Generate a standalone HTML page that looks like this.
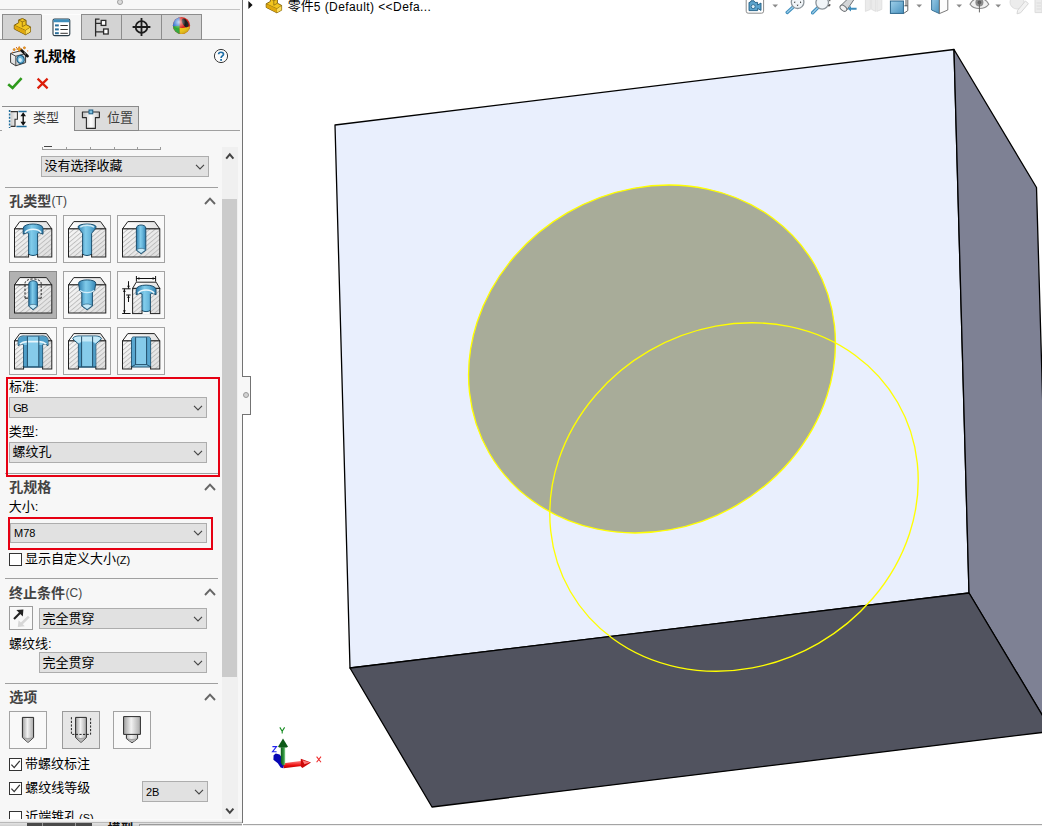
<!DOCTYPE html>
<html lang="zh-CN">
<head>
<meta charset="utf-8">
<title>孔规格 - SOLIDWORKS</title>
<style>
html,body{margin:0;padding:0}
body{width:1042px;height:826px;overflow:hidden;position:relative;background:#fff;font-family:"Liberation Sans",sans-serif;font-size:11px;color:#000}
.b{position:absolute;box-sizing:border-box;display:block}
.tx{position:absolute;display:block;white-space:nowrap;font-family:"Liberation Sans","Noto Sans CJK SC",sans-serif;font-size:13px;line-height:14px;color:#000}
.tx.h{font-size:14px;line-height:15px;font-weight:bold;color:#434343}
.lt{position:absolute;white-space:nowrap;font-family:"Liberation Sans",sans-serif;line-height:1}
.dd{position:absolute;box-sizing:border-box;background:#e1e1e1;border:1px solid #adadad}
.hb{position:absolute;box-sizing:border-box;background:#f9f9f9;border:1px solid #a3a3a3}
.hb.sel{background:#b2b2b2;border-color:#8c8c8c}
.sep{position:absolute;height:1px;background:#a0a0a0;left:5px;width:213px}
.cb{position:absolute;box-sizing:border-box;width:13px;height:13px;background:#fff;border:1px solid #333}
</style>
</head>
<body>
<svg class="b" style="left:0;top:0" width="1042" height="826" viewBox="0 0 1042 826">
<g stroke="#000" stroke-width="1.3" stroke-linejoin="round">
<polygon points="335,125 954,49.5 969,593 350,668" fill="#e9effd"/>
<polygon points="954,49.5 1036.5,187.5 1043.5,430 1050,728 969,593" fill="#7e8194"/>
<polygon points="350,668 969,593 1050,728 1050,731.5 432,807" fill="#51535f"/>
</g>
<g transform="rotate(-30 652 359)"><ellipse cx="652" cy="359" rx="188" ry="169" fill="#a8ac99" stroke="#ffff00" stroke-width="1.35"/></g>
<g transform="rotate(-30 734 497)"><ellipse cx="734" cy="497" rx="189" ry="169" fill="none" stroke="#ffff00" stroke-width="1.35"/></g>

</svg>
<div class="b" style="left:0px;top:0px;width:242px;height:826px;background:#f7f7f7"></div>
<div class="b" style="left:242px;top:0px;width:1px;height:377px;background:#737373"></div>
<div class="b" style="left:242px;top:414px;width:1px;height:409px;background:#737373"></div>
<div class="b" style="left:242px;top:376px;width:9px;height:39px;background:#f7f7f7;border:1px solid #737373;border-left:none"></div>
<div class="b" style="left:243px;top:392px;width:6px;height:6px;background:#d2d2d2;border:1px solid #989898;border-radius:50%"></div>
<div class="b" style="left:0px;top:9px;width:240px;height:1px;background:#c3c3c3"></div>
<div class="b" style="left:117px;top:-1px;width:6px;height:6px;background:#dcdcdc;border:1px solid #a0a0a0;border-radius:50%"></div>
<div class="b" style="left:0px;top:39px;width:42px;height:1px;background:#a0a0a0"></div>
<div class="b" style="left:81px;top:39px;width:159px;height:1px;background:#a0a0a0"></div>
<div class="b" style="left:2px;top:14px;width:40px;height:26px;background:#d3d3d3;border:1px solid #8c8c8c"></div>
<div class="b" style="left:41px;top:14px;width:41px;height:26px;background:#f7f7f7;border-left:1px solid #8c8c8c;border-right:1px solid #8c8c8c;border-top:1px solid #fdfdfd"></div>
<div class="b" style="left:81px;top:14px;width:41px;height:26px;background:#d3d3d3;border:1px solid #8c8c8c"></div>
<div class="b" style="left:121px;top:14px;width:41px;height:26px;background:#d3d3d3;border:1px solid #8c8c8c"></div>
<div class="b" style="left:161px;top:14px;width:41px;height:26px;background:#d3d3d3;border:1px solid #8c8c8c"></div>
<span class="tx h" style="left:33.9px;top:48.60px;color:#000">孔规格</span>
<svg class="b" style="left:213px;top:48px" width="16" height="16" viewBox="0 0 16 16" ><circle cx="8" cy="8" r="6.6" fill="#fbfbfb" stroke="#3a3a3a" stroke-width="1"/><path d="M5.6 6.3 C5.6 3.6 10.5 3.6 10.5 6.2 C10.5 7.9 8.1 8 8.1 9.9" fill="none" stroke="#1f6ea6" stroke-width="1.7"/><rect x="7.2" y="11" width="1.8" height="1.8" fill="#1f6ea6"/></svg>
<svg class="b" style="left:6px;top:76px" width="18" height="14" viewBox="0 0 18 14" ><path d="M2.2 8.2 L6.6 12 L15.6 2.2" fill="none" stroke="#2e9a1c" stroke-width="2.6" stroke-linejoin="miter"/></svg>
<svg class="b" style="left:36px;top:77px" width="14" height="13" viewBox="0 0 14 13" ><path d="M1.6 1.6 L11.6 11.4 M11.6 1.6 L1.6 11.4" fill="none" stroke="#dc1e0a" stroke-width="2.2"/></svg>
<div class="b" style="left:0px;top:130px;width:240px;height:1px;background:#a0a0a0"></div>
<div class="b" style="left:2px;top:106px;width:73px;height:26px;background:#f7f7f7;border-top:1px solid #8e8e8e"></div>
<div class="b" style="left:74px;top:106px;width:65.4px;height:25px;background:#dcdcdc;border:1px solid #8a8a8a"></div>
<span class="tx" style="left:33.1px;top:111.00px;color:#3c3c3c">类型</span>
<span class="tx" style="left:107.1px;top:111.00px;color:#3c3c3c">位置</span>
<div class="b" style="left:42px;top:146.5px;width:119.4px;height:3px;border:1px solid #9a9a9a;border-top:none;background:transparent"></div>
<div class="b" style="left:66px;top:146.5px;width:1px;height:2.5px;background:#9a9a9a"></div>
<div class="b" style="left:90px;top:146.5px;width:1px;height:2.5px;background:#9a9a9a"></div>
<div class="b" style="left:113.5px;top:146.5px;width:1px;height:2.5px;background:#9a9a9a"></div>
<div class="b" style="left:137px;top:146.5px;width:1px;height:2.5px;background:#9a9a9a"></div>
<div class="b" style="left:44px;top:146.3px;width:8px;height:1.2px;background:#444"></div>
<div class="dd" style="left:41px;top:156px;width:168px;height:21px"></div><svg class="b" style="left:194.2px;top:161.9px" width="12" height="10" viewBox="0 0 12 10" ><path d="M2 2.800 L6 7 L10 2.800" fill="none" stroke="#444" stroke-width="1.1"/></svg>
<span class="tx" style="left:44.4px;top:159.00px">没有选择收藏</span>
<div class="b" style="left:222px;top:146.5px;width:16px;height:672.5px;background:#f0f0f0"></div>
<div class="b" style="left:222px;top:199px;width:15px;height:478px;background:#cbcbcb"></div>
<svg class="b" style="left:222px;top:150px" width="16" height="12" viewBox="0 0 16 12" ><path d="M4.2 8.600 L7.800 4.400 L11.400 8.600" fill="none" stroke="#444" stroke-width="2"/></svg>
<svg class="b" style="left:222px;top:805px" width="16" height="12" viewBox="0 0 16 12" ><path d="M4.2 3.6 L7.8 7.8 L11.4 3.6" fill="none" stroke="#444" stroke-width="2"/></svg>
<div class="sep" style="top:187px"></div>
<span class="tx h" style="left:9.3px;top:194.20px">孔类型</span>
<span class="tx" style="left:51.6px;top:195.20px;font-size:12px;line-height:13px;color:#434343">(T)</span>
<svg class="b" style="left:203.3px;top:196.2px" width="14" height="10" viewBox="0 0 14 10" ><path d="M2 8 L7 2.6 L12 8" fill="none" stroke="#666" stroke-width="1.9"/></svg>
<span class="tx" style="left:9.1px;top:380.20px">标准:</span>
<div class="dd" style="left:9px;top:397px;width:198px;height:21px"></div><svg class="b" style="left:192.2px;top:402.9px" width="12" height="10" viewBox="0 0 12 10" ><path d="M2 2.800 L6 7 L10 2.800" fill="none" stroke="#444" stroke-width="1.1"/></svg>
<span class="lt" style="left:13.2px;top:403.3px;font-size:11px;color:#000;font-weight:normal;letter-spacing:-0.7px">GB</span>
<span class="tx" style="left:8.8px;top:425.20px">类型:</span>
<div class="dd" style="left:9px;top:442px;width:198px;height:21px"></div><svg class="b" style="left:192.2px;top:447.9px" width="12" height="10" viewBox="0 0 12 10" ><path d="M2 2.800 L6 7 L10 2.800" fill="none" stroke="#444" stroke-width="1.1"/></svg>
<span class="tx" style="left:12.6px;top:445.20px">螺纹孔</span>
<div class="sep" style="top:473px"></div>
<div class="b" style="left:6px;top:377px;width:214px;height:100px;border:2px solid #e60013"></div>
<span class="tx h" style="left:9.3px;top:480.40px">孔规格</span>
<svg class="b" style="left:203.1px;top:482px" width="14" height="10" viewBox="0 0 14 10" ><path d="M2 8 L7 2.6 L12 8" fill="none" stroke="#666" stroke-width="1.9"/></svg>
<span class="tx" style="left:8.8px;top:500.00px">大小:</span>
<div class="dd" style="left:10px;top:523px;width:197px;height:20px"></div><svg class="b" style="left:192.2px;top:528.4px" width="12" height="10" viewBox="0 0 12 10" ><path d="M2 2.800 L6 7 L10 2.800" fill="none" stroke="#444" stroke-width="1.1"/></svg>
<span class="lt" style="left:14px;top:528.2px;font-size:11px;color:#000;font-weight:normal;">M78</span>
<div class="b" style="left:8px;top:517px;width:205px;height:33px;border:2px solid #e60013"></div>
<div class="cb" style="left:9px;top:553px"></div>
<span class="tx" style="left:25.1px;top:552.20px">显示自定义大小</span>
<span class="tx" style="left:116.2px;top:554.00px;font-size:11px;line-height:12px">(Z)</span>
<div class="sep" style="top:578px"></div>
<span class="tx h" style="left:8.9px;top:585.60px">终止条件</span>
<span class="tx" style="left:65.6px;top:586.60px;font-size:12px;line-height:13px;color:#434343">(C)</span>
<svg class="b" style="left:203.1px;top:587.4px" width="14" height="10" viewBox="0 0 14 10" ><path d="M2 8 L7 2.6 L12 8" fill="none" stroke="#666" stroke-width="1.9"/></svg>
<div class="b" style="left:9px;top:606px;width:24px;height:24px;background:#f9f9f9;border:1px solid #9c9c9c"></div>
<svg class="b" style="left:9px;top:606px" width="24" height="24" viewBox="0 0 24 24" ><path d="M19.8 10.6 L12.2 18" stroke="#d7d7d7" stroke-width="2.5" fill="none"/><path d="M8.8 21 L9.600 14.2 L15.8 20.2 Z" fill="#d7d7d7"/><path d="M5 13 L12.2 5.8" stroke="#222" stroke-width="2.1" fill="none"/><path d="M7.4 4 L14.4 3.4 L13.8 10.4 Z" fill="#222"/></svg>
<div class="dd" style="left:39px;top:608px;width:168px;height:21px"></div><svg class="b" style="left:192.2px;top:613.9px" width="12" height="10" viewBox="0 0 12 10" ><path d="M2 2.800 L6 7 L10 2.800" fill="none" stroke="#444" stroke-width="1.1"/></svg>
<span class="tx" style="left:42.6px;top:611.50px">完全贯穿</span>
<span class="tx" style="left:8.9px;top:637.10px">螺纹线:</span>
<div class="dd" style="left:39px;top:652px;width:168px;height:21px"></div><svg class="b" style="left:192.2px;top:657.9px" width="12" height="10" viewBox="0 0 12 10" ><path d="M2 2.800 L6 7 L10 2.800" fill="none" stroke="#444" stroke-width="1.1"/></svg>
<span class="tx" style="left:42.6px;top:655.50px">完全贯穿</span>
<div class="sep" style="top:683px"></div>
<span class="tx h" style="left:9.2px;top:690.20px">选项</span>
<svg class="b" style="left:203.1px;top:692.2px" width="14" height="10" viewBox="0 0 14 10" ><path d="M2 8 L7 2.6 L12 8" fill="none" stroke="#666" stroke-width="1.9"/></svg>
<div class="hb" style="left:9px;top:711px;width:38px;height:38px;"></div>
<div class="hb" style="left:62px;top:711px;width:38px;height:38px;background:#e6e6e6;border-color:#9a9a9a"></div>
<div class="hb" style="left:113px;top:711px;width:38px;height:38px;"></div>
<div class="cb" style="left:9px;top:758px"></div><svg class="b" style="left:9px;top:758px" width="13" height="13" viewBox="0 0 13 13" ><path d="M2.4 6.6 L5.2 9.6 L10.8 2.8" fill="none" stroke="#333" stroke-width="1.25"/></svg>
<span class="tx" style="left:25.1px;top:757.20px">带螺纹标注</span>
<div class="cb" style="left:9px;top:782px"></div><svg class="b" style="left:9px;top:782px" width="13" height="13" viewBox="0 0 13 13" ><path d="M2.4 6.6 L5.2 9.6 L10.8 2.8" fill="none" stroke="#333" stroke-width="1.25"/></svg>
<span class="tx" style="left:25.3px;top:781.30px">螺纹线等级</span>
<div class="dd" style="left:142px;top:781px;width:66px;height:21px"></div><svg class="b" style="left:193.2px;top:786.9px" width="12" height="10" viewBox="0 0 12 10" ><path d="M2 2.800 L6 7 L10 2.800" fill="none" stroke="#444" stroke-width="1.1"/></svg>
<span class="lt" style="left:146px;top:787px;font-size:11px;color:#000;font-weight:normal;">2B</span>
<div class="cb" style="left:9px;top:811px;height:9px;border-bottom:none"></div>
<span class="tx" style="left:25.3px;top:810.20px;width:54.70px;height:8.60px;overflow:hidden">近端锥孔</span>
<span class="tx" style="left:79.1px;top:812.20px;width:14.53px;height:6.60px;overflow:hidden;font-size:11px;line-height:12px">(S)</span>
<div class="b" style="left:0px;top:819px;width:242px;height:7px;background:linear-gradient(#fdfdfd,#e4e4e4 55%,#cfcfcf)"></div>
<div class="b" style="left:0px;top:822px;width:242px;height:1px;background:#b9b9b9"></div>
<div class="b" style="left:243px;top:824px;width:799px;height:1px;background:#a4a4a4"></div>
<div class="b" style="left:243px;top:825px;width:799px;height:1px;background:#f0f0f0"></div>
<div class="b" style="left:27px;top:823.4px;width:65px;height:3px;background:#4a4a4a"></div>
<div class="b" style="left:42px;top:823.4px;width:1px;height:3px;background:#9a9a9a"></div>
<div class="b" style="left:74.5px;top:823.4px;width:1px;height:3px;background:#9a9a9a"></div>
<span class="tx" style="left:107.4px;top:821.60px;width:27.70px;height:4.60px;overflow:hidden;color:#111;font-weight:bold">模型</span>
<div class="b" style="left:139px;top:823.6px;width:103px;height:3px;background:#d8d8d8;border-top:1px solid #9a9a9a;border-left:1px solid #9a9a9a"></div>
<div class="hb" style="left:9px;top:215px;width:48px;height:48px"></div>
<svg class="b" style="left:9px;top:215px" width="48" height="48" viewBox="0 0 48 48" ><defs><linearGradient id="bl0" x1="0" x2="1" y1="0" y2="0"><stop offset="0" stop-color="#2f7eae"/><stop offset=".42" stop-color="#80cbea"/><stop offset=".62" stop-color="#6cbade"/><stop offset="1" stop-color="#3283b3"/></linearGradient><linearGradient id="tf0" x1="0" x2="1" y1="0" y2="0"><stop offset="0" stop-color="#ffffff"/><stop offset="1" stop-color="#e2e2e2"/></linearGradient><linearGradient id="ff0" x1="0" x2="1" y1="0" y2="1"><stop offset="0" stop-color="#f7f7f7"/><stop offset="1" stop-color="#dedede"/></linearGradient><pattern id="ht0" width="4" height="3.5" patternUnits="userSpaceOnUse" patternTransform="rotate(-40)"><rect width="4" height="0.95" fill="#bdbdbd"/></pattern></defs><path d="M5.5 13.9 L10.8 6.6 L37.5 6.6 L42.8 13.9 Z" fill="url(#tf0)" stroke="#222" stroke-width="1" stroke-linejoin="round"/><rect x="5.5" y="13.9" width="37.3" height="28.1" fill="url(#ff0)"/><rect x="5.5" y="13.9" width="37.3" height="28.1" fill="url(#ht0)" stroke="#222" stroke-width="1"/><rect x="19.6" y="38" width="9" height="5" fill="#f9f9f9"/><path d="M14.2 13.2 C14.2 7.6 34 7.6 34 13.2 L34 19.2 C31.5 17.8 29.6 17.6 28.6 18.4 L28.6 39 C26 41 22 41 19.6 39 L19.6 18.4 C18.6 17.6 16.7 17.8 14.2 19.2 Z" fill="url(#bl0)" stroke="#1c4f6e" stroke-width="1" stroke-linejoin="round" /><path d="M16 17.6 C19 13.2 29.2 13.2 32.2 17.6" fill="none" stroke="#e8f6fc" stroke-width="1.5"/><path d="M19.6 39 L19.6 42.4 M28.6 39 L28.6 42.4" stroke="#222" stroke-width="1"/></svg>
<div class="hb" style="left:63px;top:215px;width:48px;height:48px"></div>
<svg class="b" style="left:63px;top:215px" width="48" height="48" viewBox="0 0 48 48" ><defs><linearGradient id="bl1" x1="0" x2="1" y1="0" y2="0"><stop offset="0" stop-color="#2f7eae"/><stop offset=".42" stop-color="#80cbea"/><stop offset=".62" stop-color="#6cbade"/><stop offset="1" stop-color="#3283b3"/></linearGradient><linearGradient id="tf1" x1="0" x2="1" y1="0" y2="0"><stop offset="0" stop-color="#ffffff"/><stop offset="1" stop-color="#e2e2e2"/></linearGradient><linearGradient id="ff1" x1="0" x2="1" y1="0" y2="1"><stop offset="0" stop-color="#f7f7f7"/><stop offset="1" stop-color="#dedede"/></linearGradient><pattern id="ht1" width="4" height="3.5" patternUnits="userSpaceOnUse" patternTransform="rotate(-40)"><rect width="4" height="0.95" fill="#bdbdbd"/></pattern></defs><path d="M5.5 13.9 L10.8 6.6 L37.5 6.6 L42.8 13.9 Z" fill="url(#tf1)" stroke="#222" stroke-width="1" stroke-linejoin="round"/><rect x="5.5" y="13.9" width="37.3" height="28.1" fill="url(#ff1)"/><rect x="5.5" y="13.9" width="37.3" height="28.1" fill="url(#ht1)" stroke="#222" stroke-width="1"/><rect x="19.6" y="38" width="9" height="5" fill="#f9f9f9"/><path d="M15 12 C15 8 33.2 8 33.2 12 C31.5 15.5 29.4 17 28.6 18.6 L28.6 39 C26 41 22 41 19.6 39 L19.6 18.6 C18.8 17 16.7 15.5 15 12 Z" fill="url(#bl1)" stroke="#1c4f6e" stroke-width="1" stroke-linejoin="round" /><path d="M17.2 12.2 C20 9.6 28.2 9.6 31 12.2" fill="none" stroke="#cdeaf6" stroke-width="1.3"/><path d="M19.6 39 L19.6 42.4 M28.6 39 L28.6 42.4" stroke="#222" stroke-width="1"/></svg>
<div class="hb" style="left:117px;top:215px;width:48px;height:48px"></div>
<svg class="b" style="left:117px;top:215px" width="48" height="48" viewBox="0 0 48 48" ><defs><linearGradient id="bl2" x1="0" x2="1" y1="0" y2="0"><stop offset="0" stop-color="#2f7eae"/><stop offset=".42" stop-color="#80cbea"/><stop offset=".62" stop-color="#6cbade"/><stop offset="1" stop-color="#3283b3"/></linearGradient><linearGradient id="tf2" x1="0" x2="1" y1="0" y2="0"><stop offset="0" stop-color="#ffffff"/><stop offset="1" stop-color="#e2e2e2"/></linearGradient><linearGradient id="ff2" x1="0" x2="1" y1="0" y2="1"><stop offset="0" stop-color="#f7f7f7"/><stop offset="1" stop-color="#dedede"/></linearGradient><pattern id="ht2" width="4" height="3.5" patternUnits="userSpaceOnUse" patternTransform="rotate(-40)"><rect width="4" height="0.95" fill="#bdbdbd"/></pattern></defs><path d="M5.5 13.9 L10.8 6.6 L37.5 6.6 L42.8 13.9 Z" fill="url(#tf2)" stroke="#222" stroke-width="1" stroke-linejoin="round"/><rect x="5.5" y="13.9" width="37.3" height="28.1" fill="url(#ff2)"/><rect x="5.5" y="13.9" width="37.3" height="28.1" fill="url(#ht2)" stroke="#222" stroke-width="1"/><path d="M19.4 13 C19.4 9 28.8 9 28.8 13 L28.8 35.2 L24.1 38.8 L19.4 35.2 Z" fill="url(#bl2)" stroke="#1c4f6e" stroke-width="1" stroke-linejoin="round" /><path d="M19.6 35 C21.5 32.8 26.7 32.8 28.6 35 L24.1 38.4 Z" fill="#c6ebfa" stroke="#1c4f6e" stroke-width=".6"/></svg>
<div class="hb sel" style="left:9px;top:271px;width:48px;height:48px"></div>
<svg class="b" style="left:9px;top:271px" width="48" height="48" viewBox="0 0 48 48" ><defs><linearGradient id="bl3" x1="0" x2="1" y1="0" y2="0"><stop offset="0" stop-color="#2f7eae"/><stop offset=".42" stop-color="#80cbea"/><stop offset=".62" stop-color="#6cbade"/><stop offset="1" stop-color="#3283b3"/></linearGradient><linearGradient id="tf3" x1="0" x2="1" y1="0" y2="0"><stop offset="0" stop-color="#ffffff"/><stop offset="1" stop-color="#e2e2e2"/></linearGradient><linearGradient id="ff3" x1="0" x2="1" y1="0" y2="1"><stop offset="0" stop-color="#f7f7f7"/><stop offset="1" stop-color="#dedede"/></linearGradient><pattern id="ht3" width="4" height="3.5" patternUnits="userSpaceOnUse" patternTransform="rotate(-40)"><rect width="4" height="0.95" fill="#bdbdbd"/></pattern></defs><path d="M5.5 13.9 L10.8 6.6 L37.5 6.6 L42.8 13.9 Z" fill="url(#tf3)" stroke="#222" stroke-width="1" stroke-linejoin="round"/><rect x="5.5" y="13.9" width="37.3" height="28.1" fill="url(#ff3)"/><rect x="5.5" y="13.9" width="37.3" height="28.1" fill="url(#ht3)" stroke="#222" stroke-width="1"/><path d="M19.8 12.6 C19.8 8.8 28.4 8.8 28.4 12.6 L28.4 35.2 L24.1 38.8 L19.8 35.2 Z" fill="url(#bl3)" stroke="#1c4f6e" stroke-width="1" stroke-linejoin="round" /><path d="M19.9 35 C21.6 32.8 26.6 32.8 28.3 35 L24.1 38.4 Z" fill="#c6ebfa" stroke="#1c4f6e" stroke-width=".6"/><path d="M16 27.2 L16 12.5 C16 6.4 32.2 6.4 32.2 12.5 L32.2 27.2" fill="none" stroke="#222" stroke-width="1" stroke-dasharray="2.2 1.5"/><path d="M16 27.2 L19 27.2 M29.2 27.2 L32.2 27.2" stroke="#222" stroke-width="1"/></svg>
<div class="hb" style="left:63px;top:271px;width:48px;height:48px"></div>
<svg class="b" style="left:63px;top:271px" width="48" height="48" viewBox="0 0 48 48" ><defs><linearGradient id="bl4" x1="0" x2="1" y1="0" y2="0"><stop offset="0" stop-color="#2f7eae"/><stop offset=".42" stop-color="#80cbea"/><stop offset=".62" stop-color="#6cbade"/><stop offset="1" stop-color="#3283b3"/></linearGradient><linearGradient id="tf4" x1="0" x2="1" y1="0" y2="0"><stop offset="0" stop-color="#ffffff"/><stop offset="1" stop-color="#e2e2e2"/></linearGradient><linearGradient id="ff4" x1="0" x2="1" y1="0" y2="1"><stop offset="0" stop-color="#f7f7f7"/><stop offset="1" stop-color="#dedede"/></linearGradient><pattern id="ht4" width="4" height="3.5" patternUnits="userSpaceOnUse" patternTransform="rotate(-40)"><rect width="4" height="0.95" fill="#bdbdbd"/></pattern></defs><path d="M5.5 13.9 L10.8 6.6 L37.5 6.6 L42.8 13.9 Z" fill="url(#tf4)" stroke="#222" stroke-width="1" stroke-linejoin="round"/><rect x="5.5" y="13.9" width="37.3" height="28.1" fill="url(#ff4)"/><rect x="5.5" y="13.9" width="37.3" height="28.1" fill="url(#ht4)" stroke="#222" stroke-width="1"/><path d="M15.6 12.2 C15.6 7.8 32.8 7.8 32.8 12.2 L31.6 19.6 C30.8 20.6 30 20.8 29.4 21 L29.4 35 L24.1 38.8 L18.8 35 L18.8 21 C18.2 20.8 17.4 20.6 16.6 19.6 Z" fill="url(#bl4)" stroke="#1c4f6e" stroke-width="1" stroke-linejoin="round" /><path d="M17 19.4 C20 22.4 28.2 22.4 31.2 19.4" fill="none" stroke="#d4eefa" stroke-width="1.3"/><path d="M19 34.8 C21 32.4 27.2 32.4 29.2 34.8 L24.1 38.4 Z" fill="#c6ebfa" stroke="#1c4f6e" stroke-width=".6"/></svg>
<div class="hb" style="left:117px;top:271px;width:48px;height:48px"></div>
<svg class="b" style="left:117px;top:271px" width="48" height="48" viewBox="0 0 48 48" ><defs><linearGradient id="bl5" x1="0" x2="1" y1="0" y2="0"><stop offset="0" stop-color="#2f7eae"/><stop offset=".42" stop-color="#80cbea"/><stop offset=".62" stop-color="#6cbade"/><stop offset="1" stop-color="#3283b3"/></linearGradient><linearGradient id="tf5" x1="0" x2="1" y1="0" y2="0"><stop offset="0" stop-color="#ffffff"/><stop offset="1" stop-color="#e2e2e2"/></linearGradient><linearGradient id="ff5" x1="0" x2="1" y1="0" y2="1"><stop offset="0" stop-color="#f7f7f7"/><stop offset="1" stop-color="#dedede"/></linearGradient><pattern id="ht5" width="4" height="3.5" patternUnits="userSpaceOnUse" patternTransform="rotate(-40)"><rect width="4" height="0.95" fill="#bdbdbd"/></pattern></defs><path d="M15.6 17.4 L19.2 11.2 L39.2 11.2 L42.8 17.4 Z" fill="url(#tf5)" stroke="#222" stroke-width="1" stroke-linejoin="round"/><rect x="15.6" y="17.4" width="27.2" height="25.2" fill="url(#ff5)"/><rect x="15.6" y="17.4" width="27.2" height="25.2" fill="url(#ht5)" stroke="#222" stroke-width="1"/><rect x="25" y="38.5" width="8.4" height="5" fill="#f9f9f9"/><path d="M19.2 18.6 C19.2 12.6 39 12.6 39 18.6 L39 23.8 C36.5 22.4 34.4 22.2 33.4 23 L33.4 39.4 C31 41 27 41 25 39.4 L25 23 C24 22.2 21.7 22.4 19.2 23.8 Z" fill="url(#bl5)" stroke="#1c4f6e" stroke-width="1" stroke-linejoin="round" /><path d="M21 22.4 C24 18 34.2 18 37.2 22.4" fill="none" stroke="#e8f6fc" stroke-width="1.5"/><path d="M25 39.4 L25 43 M33.4 39.4 L33.4 43" stroke="#222" stroke-width="1"/><g stroke="#111" stroke-width="1" fill="none"><path d="M19.4 5 L19.4 10.600 M38.6 5 L38.6 10.600 M19.4 7.500 L38.6 7.500"/><path d="M5.200 17.800 L13.600 17.800 M5.200 42.500 L13.600 42.500 M7.400 17.800 L7.400 42.500 M9.200 24 L13.600 24 M11.500 10.200 L11.500 17.600 M11.500 24.200 L11.500 31"/></g><g fill="#111"><path d="M19.4 7.500 L22.400 6.200 L22.400 8.800 Z M38.6 7.500 L35.600 6.200 L35.600 8.800 Z M7.400 17.800 L6.100 21 L8.700 21 Z M7.400 42.500 L6.100 39.300 L8.700 39.300 Z M11.500 17.800 L10.200 14.800 L12.800 14.800 Z M11.500 24 L10.200 27 L12.800 27 Z"/></g></svg>
<div class="hb" style="left:9px;top:327px;width:48px;height:48px"></div>
<svg class="b" style="left:9px;top:327px" width="48" height="48" viewBox="0 0 48 48" ><defs><linearGradient id="bl6" x1="0" x2="1" y1="0" y2="0"><stop offset="0" stop-color="#2f7eae"/><stop offset=".42" stop-color="#80cbea"/><stop offset=".62" stop-color="#6cbade"/><stop offset="1" stop-color="#3283b3"/></linearGradient><linearGradient id="tf6" x1="0" x2="1" y1="0" y2="0"><stop offset="0" stop-color="#ffffff"/><stop offset="1" stop-color="#e2e2e2"/></linearGradient><linearGradient id="ff6" x1="0" x2="1" y1="0" y2="1"><stop offset="0" stop-color="#f7f7f7"/><stop offset="1" stop-color="#dedede"/></linearGradient><pattern id="ht6" width="4" height="3.5" patternUnits="userSpaceOnUse" patternTransform="rotate(-40)"><rect width="4" height="0.95" fill="#bdbdbd"/></pattern></defs><path d="M5.5 13.9 L10.8 6.6 L37.5 6.6 L42.8 13.9 Z" fill="url(#tf6)" stroke="#222" stroke-width="1" stroke-linejoin="round"/><rect x="5.5" y="13.9" width="37.3" height="28.1" fill="url(#ff6)"/><rect x="5.5" y="13.9" width="37.3" height="28.1" fill="url(#ht6)" stroke="#222" stroke-width="1"/><rect x="14.6" y="37" width="19" height="6" fill="#f9f9f9"/><path d="M9.2 13 C9.2 8 16 9 17 9 L31.2 9 C32.2 9 39 8 39 13 L39 18.6 C36 16.6 34.2 16.8 33.6 17.8 L33.6 40 L14.6 40 L14.6 17.8 C14 16.8 12.2 16.6 9.2 18.6 Z" fill="#86cbea" stroke="#1c4f6e" stroke-width="1" stroke-linejoin="round"/><path d="M9.6 12.4 C10 9.4 14 9.4 18.4 9.4 L18.4 14.4 C14 14.6 11.4 15.6 9.6 18 Z M38.6 12.4 C38.2 9.4 34.2 9.4 29.8 9.4 L29.8 14.4 C34.2 14.6 36.8 15.6 38.6 18 Z" fill="#4f9ec8"/><path d="M15 18 L18.4 18 L18.4 39.6 L15 39.6 Z M33.2 18 L29.8 18 L29.8 39.6 L33.2 39.6 Z" fill="#4f9ec8"/><path d="M11 17.2 C14 14.4 17 14.6 18.4 14.6 L29.8 14.6 C31.2 14.6 34.2 14.4 37.2 17.2" fill="none" stroke="#e8f6fc" stroke-width="1.6"/><path d="M18.4 9.4 L18.4 39.8 M29.8 9.4 L29.8 39.8" stroke="#17425c" stroke-width=".9"/><path d="M14.6 39.4 L14.6 42.4 M33.6 39.4 L33.6 42.4" stroke="#222" stroke-width="1"/><path d="M14.6 40 L33.6 40" stroke="#1c4f6e" stroke-width="1"/></svg>
<div class="hb" style="left:63px;top:327px;width:48px;height:48px"></div>
<svg class="b" style="left:63px;top:327px" width="48" height="48" viewBox="0 0 48 48" ><defs><linearGradient id="bl7" x1="0" x2="1" y1="0" y2="0"><stop offset="0" stop-color="#2f7eae"/><stop offset=".42" stop-color="#80cbea"/><stop offset=".62" stop-color="#6cbade"/><stop offset="1" stop-color="#3283b3"/></linearGradient><linearGradient id="tf7" x1="0" x2="1" y1="0" y2="0"><stop offset="0" stop-color="#ffffff"/><stop offset="1" stop-color="#e2e2e2"/></linearGradient><linearGradient id="ff7" x1="0" x2="1" y1="0" y2="1"><stop offset="0" stop-color="#f7f7f7"/><stop offset="1" stop-color="#dedede"/></linearGradient><pattern id="ht7" width="4" height="3.5" patternUnits="userSpaceOnUse" patternTransform="rotate(-40)"><rect width="4" height="0.95" fill="#bdbdbd"/></pattern></defs><path d="M5.5 13.9 L10.8 6.6 L37.5 6.6 L42.8 13.9 Z" fill="url(#tf7)" stroke="#222" stroke-width="1" stroke-linejoin="round"/><rect x="5.5" y="13.9" width="37.3" height="28.1" fill="url(#ff7)"/><rect x="5.5" y="13.9" width="37.3" height="28.1" fill="url(#ht7)" stroke="#222" stroke-width="1"/><rect x="15.4" y="37" width="17.4" height="6" fill="#f9f9f9"/><path d="M9.8 11.6 C11 8.6 16 9 18 9 L30.2 9 C32.2 9 37.2 8.600 38.4 11.6 C36.4 14.8 33.8 15.4 32.8 17 L32.8 40 L15.4 40 L15.4 17 C14.4 15.4 11.800 14.8 9.8 11.6 Z" fill="#86cbea" stroke="#1c4f6e" stroke-width="1" stroke-linejoin="round"/><path d="M10.4 11.6 C12 9.6 15 9.6 18.6 9.6 L29.6 9.6 C33.2 9.6 36.2 9.6 37.8 11.6 C36 14 33.6 15 32.6 16 L29.600 14.4 L18.6 14.4 L15.6 16 C14.6 15 12.2 14 10.4 11.6 Z" fill="#c4e9f8"/><path d="M15.8 17 L18.6 15 L18.6 39.6 L15.8 39.6 Z M32.4 17 L29.600 15 L29.600 39.6 L32.4 39.6 Z" fill="#4f9ec8"/><path d="M18.6 9.4 L18.6 39.8 M29.6 9.4 L29.6 39.8" stroke="#17425c" stroke-width=".9"/><path d="M15.4 39.4 L15.4 42.4 M32.8 39.4 L32.8 42.4" stroke="#222" stroke-width="1"/><path d="M15.4 40 L32.8 40" stroke="#1c4f6e" stroke-width="1"/></svg>
<div class="hb" style="left:117px;top:327px;width:48px;height:48px"></div>
<svg class="b" style="left:117px;top:327px" width="48" height="48" viewBox="0 0 48 48" ><defs><linearGradient id="bl8" x1="0" x2="1" y1="0" y2="0"><stop offset="0" stop-color="#2f7eae"/><stop offset=".42" stop-color="#80cbea"/><stop offset=".62" stop-color="#6cbade"/><stop offset="1" stop-color="#3283b3"/></linearGradient><linearGradient id="tf8" x1="0" x2="1" y1="0" y2="0"><stop offset="0" stop-color="#ffffff"/><stop offset="1" stop-color="#e2e2e2"/></linearGradient><linearGradient id="ff8" x1="0" x2="1" y1="0" y2="1"><stop offset="0" stop-color="#f7f7f7"/><stop offset="1" stop-color="#dedede"/></linearGradient><pattern id="ht8" width="4" height="3.5" patternUnits="userSpaceOnUse" patternTransform="rotate(-40)"><rect width="4" height="0.95" fill="#bdbdbd"/></pattern></defs><path d="M5.5 13.9 L10.8 6.6 L37.5 6.6 L42.8 13.9 Z" fill="url(#tf8)" stroke="#222" stroke-width="1" stroke-linejoin="round"/><rect x="5.5" y="13.9" width="37.3" height="28.1" fill="url(#ff8)"/><rect x="5.5" y="13.9" width="37.3" height="28.1" fill="url(#ht8)" stroke="#222" stroke-width="1"/><rect x="14.600" y="37" width="19" height="6" fill="#f9f9f9"/><path d="M14.6 12.4 C14.6 9.4 17 10 19 10 L29.2 10 C31.2 10 33.6 9.4 33.6 12.4 L33.6 40 L14.6 40 Z" fill="#86cbea" stroke="#1c4f6e" stroke-width="1" stroke-linejoin="round"/><path d="M15 12.4 C15 10.4 16.6 10.4 18.6 10.4 L18.6 37.6 L15 39.6 Z M33.2 12.4 C33.2 10.4 31.6 10.4 29.6 10.4 L29.6 37.6 L33.2 39.6 Z" fill="#58a6cf"/><path d="M18.6 10.200 L18.6 37.6 M29.6 10.200 L29.6 37.6 M15 39.6 L18.6 37.6 L29.6 37.6 L33.2 39.6" fill="none" stroke="#17425c" stroke-width=".9"/><path d="M14.6 39.4 L14.6 42.4 M33.6 39.4 L33.6 42.4" stroke="#222" stroke-width="1"/></svg>
<svg class="b" style="left:9px;top:711px" width="38" height="38" viewBox="0 0 38 38" ><defs><linearGradient id="tg1" x1="0" x2="1" y1="0" y2="0"><stop offset="0" stop-color="#9f9f9f"/><stop offset=".45" stop-color="#f2f2f2"/><stop offset="1" stop-color="#a8a8a8"/></linearGradient></defs><path d="M13.4 6.4 L24.6 6.4 L24.6 26.6 L19 31.4 L13.4 26.6 Z" fill="url(#tg1)" stroke="#2a2a2a" stroke-width="1" stroke-linejoin="round"/><path d="M13.6 26.4 C15.6 27.8 22.4 27.8 24.4 26.4 L19 31 Z" fill="#b9b9b9"/><path d="M13.6 26.400 C15.6 27.800 22.4 27.8 24.4 26.4" fill="none" stroke="#8a8a8a" stroke-width=".7"/></svg>
<svg class="b" style="left:62px;top:711px" width="38" height="38" viewBox="0 0 38 38" ><defs><linearGradient id="tg2" x1="0" x2="1" y1="0" y2="0"><stop offset="0" stop-color="#9f9f9f"/><stop offset=".45" stop-color="#f2f2f2"/><stop offset="1" stop-color="#a8a8a8"/></linearGradient></defs><path d="M13.6 6.4 L24.4 6.4 L24.4 26.6 L19 31.4 L13.6 26.6 Z" fill="url(#tg2)" stroke="#2a2a2a" stroke-width="1" stroke-linejoin="round"/><path d="M13.8 26.4 C15.6 27.8 22.4 27.8 24.2 26.4 L19 31 Z" fill="#b9b9b9"/><path d="M13.8 26.400 C15.6 27.800 22.4 27.8 24.2 26.4" fill="none" stroke="#8a8a8a" stroke-width=".7"/><path d="M9.4 6.200 L9.4 23.4 L28.6 23.4 L28.6 6.2" fill="none" stroke="#222" stroke-width="1" stroke-dasharray="2.2 1.4"/></svg>
<svg class="b" style="left:113px;top:711px" width="38" height="38" viewBox="0 0 38 38" ><defs><linearGradient id="tg3" x1="0" x2="1" y1="0" y2="0"><stop offset="0" stop-color="#9f9f9f"/><stop offset=".45" stop-color="#f2f2f2"/><stop offset="1" stop-color="#a8a8a8"/></linearGradient></defs><path d="M10.6 5.600 L27.4 5.600 L27.4 23.4 L24.600 23.4 L24.600 27.6 L19 31.8 L13.4 27.6 L13.4 23.4 L10.6 23.4 Z" fill="url(#tg3)" stroke="#2a2a2a" stroke-width="1" stroke-linejoin="round"/><path d="M13.4 23.4 L24.6 23.400" stroke="#2a2a2a" stroke-width="1"/><path d="M13.6 27.4 C15.6 28.8 22.4 28.8 24.4 27.4 L19 31.4 Z" fill="#b9b9b9"/><path d="M13.6 27.4 C15.6 28.800 22.4 28.8 24.4 27.400" fill="none" stroke="#8a8a8a" stroke-width=".7"/></svg>
<svg class="b" style="left:8px;top:109px" width="20" height="20" viewBox="0 0 20 20" ><defs><linearGradient id="st1" x1="0" x2="1"><stop offset="0" stop-color="#c9c9c9"/><stop offset="1" stop-color="#fbfbfb"/></linearGradient></defs><path d="M2.6 2.6 L9.4 2.6 L9.4 10.2 L7 10.2 L7 17.4 L2.6 17.4 Z" fill="url(#st1)"/><path d="M2.6 2.6 L9.4 2.6 L9.4 10.2 L7 10.2 L7 17.4 L2.6 17.4" fill="none" stroke="#333" stroke-width="1.1"/><path d="M1.6 1 L1.6 19" stroke="#1f6d9c" stroke-width="1.5" stroke-dasharray="2 1.4"/><path d="M10.4 2.4 L18.6 2.4 M8.4 17.6 L18.600 17.6" stroke="#1f6d9c" stroke-width="1.5"/><path d="M15.200 5.200 L15.2 15" stroke="#111" stroke-width="1.4"/><path d="M15.200 3.200 L12.4 7.2 L18 7.2 Z M15.2 16.8 L12.4 12.8 L18 12.8 Z" fill="#111"/></svg>
<svg class="b" style="left:81px;top:109px" width="20" height="21" viewBox="0 0 20 21" ><defs><linearGradient id="st2" x1="0" x2="1"><stop offset="0" stop-color="#bdbdbd"/><stop offset=".5" stop-color="#ffffff"/><stop offset="1" stop-color="#c6c6c6"/></linearGradient></defs><path d="M1.4 3 L18.4 3 L18.4 8.6 L14.4 8.6 L14.400 19.4 L5.4 19.4 L5.4 8.6 L1.4 8.6 Z" fill="url(#st2)" stroke="#2b2b2b" stroke-width="1.1" stroke-linejoin="round"/><rect x="8" y="1" width="3.800" height="3.800" fill="#7fc0e0" stroke="#1b5a80" stroke-width="1"/></svg>
<svg class="b" style="left:9px;top:46px" width="21" height="21" viewBox="0 0 21 21" ><defs><linearGradient id="hw1" x1="0" x2="1" y1="0" y2="1"><stop offset="0" stop-color="#ffffff"/><stop offset="1" stop-color="#bfbfbf"/></linearGradient></defs><path d="M1.6 7.400 L11.4 4.800 L16.6 7.6 L16.6 16.6 L6.8 19.800 L1.6 16.6 Z" fill="url(#hw1)" stroke="#3a3a3a" stroke-width="1" stroke-linejoin="round"/><path d="M1.6 7.400 L6.8 10.200 L16.6 7.6 M6.8 10.2 L6.8 19.800" fill="none" stroke="#3a3a3a" stroke-width=".9"/><ellipse cx="11.600" cy="13.400" rx="3.6" ry="4" fill="#6eb6da" stroke="#17567c" stroke-width="1.1" transform="rotate(-14 11.6 13.4)"/><ellipse cx="11.200" cy="14" rx="1.7" ry="2" fill="#d8eef8" transform="rotate(-14 11.2 14)"/><path d="M12.4 4.200 L18.6 10.200" stroke="#111" stroke-width="2.6" stroke-linecap="round"/><path d="M15.200 6.600 L16.8 8.200" stroke="#eee" stroke-width=".8"/><g fill="#f0a418" stroke="#c05c08" stroke-width=".5"><circle cx="5.200" cy="3.600" r="1.1"/><circle cx="15.400" cy="1.800" r="1.1"/><path d="M10.200 .4 L11.200 2.200 L13 3 L11.200 3.800 L10.2 5.600 L9.2 3.800 L7.400 3 L9.200 2.200 Z"/></g><g fill="#e46a10"><rect x="7" y="1" width="1" height="1"/><rect x="18.200" y="4.400" width="1" height="1"/><rect x="3" y="5.800" width="1" height="1"/></g></svg>
<svg class="b" style="left:13.4px;top:17.8px" width="19" height="18" viewBox="0 0 18 17"><path d="M1.2 6.800 L5.4 4.400 L5.400 1.800 L9 .4 L12.4 2.200 L12.4 6.200 L16.6 8.400 L16.6 13.200 L11.800 15.800 L1.2 10.400 Z" fill="#f2c51e" stroke="#7a5a08" stroke-width=".9" stroke-linejoin="round"/><path d="M1.2 6.800 L11.800 11.800 L16.6 8.600 M11.800 11.800 L11.8 15.600 M5.400 1.800 L8.800 3.600 L12.4 2.200 M8.800 3.600 L8.800 8.200 L12.2 6.400" fill="none" stroke="#8a6a10" stroke-width=".8"/><path d="M1.6 7.200 L11.6 12 L11.600 15.400 L1.600 10.200 Z" fill="#e0a80c"/><path d="M12 12 L16.400 9 L16.4 13 L12 15.400 Z" fill="#f8da5a"/></svg>
<svg class="b" style="left:52.4px;top:18px" width="19" height="19" viewBox="0 0 19 19" ><rect x="1" y="1" width="16.800" height="16.600" rx="1.6" fill="#fff" stroke="#2a3c48" stroke-width="1.1"/><path d="M1.4 2.600 C1.4 1.400 2 1.200 3 1.200 L15.800 1.200 C16.800 1.200 17.400 1.400 17.400 2.600 L17.400 4.200 L1.4 4.200 Z" fill="#3e8dba"/><g fill="#2a6f9c"><rect x="3" y="6.400" width="3.800" height="2"/><rect x="3" y="10.400" width="3.800" height="2"/><rect x="3" y="14.200" width="3.800" height="2"/></g><g fill="#333"><rect x="8.400" y="7" width="7.400" height="1"/><rect x="8.400" y="11" width="7.400" height="1"/><rect x="8.400" y="14.800" width="7.400" height="1"/></g></svg>
<svg class="b" style="left:94.4px;top:17.5px" width="16" height="20" viewBox="0 0 16 20" ><g fill="#fff" stroke="#2b2b2b" stroke-width="1.3"><path d="M1.6 1 L1.600 18.400 M1 1.200 L5.600 1.200"/><path d="M1.600 5.400 L7.600 5.400 M1.6 13.800 L9.600 13.800" fill="none"/><rect x="7.200" y="2.400" width="4.600" height="5"/><rect x="9.600" y="11" width="4.600" height="5"/></g></svg>
<svg class="b" style="left:131.8px;top:17px" width="19" height="20" viewBox="0 0 19 20" ><circle cx="9.500" cy="10" r="5.800" fill="none" stroke="#1c1c1c" stroke-width="1.8"/><path d="M9.500 1 L9.500 19 M.6 10 L18.400 10" stroke="#1c1c1c" stroke-width="1.8"/></svg>
<svg class="b" style="left:171.8px;top:16px" width="19" height="19" viewBox="0 0 19 19" ><defs><radialGradient id="bb" cx=".35" cy=".3" r=".8"><stop offset="0" stop-color="#fff" stop-opacity=".75"/><stop offset=".5" stop-color="#fff" stop-opacity="0"/><stop offset="1" stop-color="#000" stop-opacity=".25"/></radialGradient><clipPath id="bbc"><circle cx="9.500" cy="9.500" r="8.600"/></clipPath></defs><g clip-path="url(#bbc)"><rect width="19" height="19" fill="#d82018"/><path d="M0 0 L7.600 0 L7.600 10 L0 11 Z" fill="#2a6ed0"/><path d="M0 10.600 L7.600 9.800 L8 19 L0 19 Z" fill="#2ea836"/><path d="M7.600 11.800 C12 12.400 16 11.400 19 9.800 L19 19 L7.800 19 Z" fill="#f0c410"/><ellipse cx="13.200" cy="6.800" rx="2.600" ry="4.800" fill="#1a1a1a" transform="rotate(-32 13.2 6.800)"/></g><circle cx="9.500" cy="9.500" r="8.600" fill="url(#bb)"/></svg>
<svg class="b" style="left:246.8px;top:0px" width="8" height="10" viewBox="0 0 8 10" ><path d="M1.4 1 L5.600 5 L1.400 9 Z" fill="#111"/></svg>
<svg class="b" style="left:265px;top:-3px" width="18" height="17" viewBox="0 0 18 17" ><path d="M1.2 6.800 L5.4 4.400 L5.400 1.800 L9 .4 L12.4 2.200 L12.4 6.200 L16.6 8.400 L16.6 13.200 L11.800 15.800 L1.2 10.400 Z" fill="#f2c51e" stroke="#7a5a08" stroke-width=".9" stroke-linejoin="round"/><path d="M1.2 6.800 L11.800 11.800 L16.6 8.600 M11.800 11.800 L11.8 15.600 M5.400 1.800 L8.800 3.600 L12.4 2.200 M8.800 3.600 L8.800 8.200 L12.2 6.400" fill="none" stroke="#8a6a10" stroke-width=".8"/><path d="M1.6 7.200 L11.6 12 L11.600 15.400 L1.600 10.200 Z" fill="#e0a80c"/><path d="M12 12 L16.400 9 L16.4 13 L12 15.400 Z" fill="#f8da5a"/></svg>
<span class="tx" style="left:287.7px;top:-0.70px">零件</span>
<span class="lt" style="left:313.8px;top:0.9px;font-size:12px;color:#000;font-weight:normal;letter-spacing:0.42px">5 (Default) &lt;&lt;Defa...</span>
<svg class="b" style="left:745px;top:-4px" width="20" height="18" viewBox="0 0 20 18" ><rect x="1.200" y="-2" width="17.400" height="19.200" rx="2" fill="#fff" stroke="#8b8b8b" stroke-width="1"/><path d="M4 6.400 L4 14.600 L12.600 14.600 L12.600 12.400 L16 14.400 L16 7 L12.6 9 L12.600 6.400 L10 6.400 L9 4.800 L6 4.800 L5.200 6.400 Z" fill="#5aa3cc" stroke="#1f5b82" stroke-width=".9"/><circle cx="8.200" cy="10.600" r="2" fill="#d9eef8" stroke="#1f5b82" stroke-width=".8"/></svg>
<svg class="b" style="left:771.5px;top:3.6px" width="7" height="4" viewBox="0 0 7 4" ><path d="M.4 .4 L6 .4 L3.200 3.400 Z" fill="#8a8a8a"/></svg>
<svg class="b" style="left:785px;top:-3px" width="20" height="18" viewBox="0 0 20 18" ><path d="M2.2 15.4 L8.2 10" stroke="#3f8fbe" stroke-width="3.4" stroke-linecap="round"/><path d="M2.2 15.4 L8.2 10" stroke="#a6d2ea" stroke-width="1.2" stroke-linecap="round"/><circle cx="12.6" cy="5.2" r="6.300" fill="#f1f5f8" stroke="#8d959b" stroke-width="1.3"/><path d="M10.200 4.200 L8.800 5.200 L10.200 6.200 Z M15 4.200 L16.400 5.200 L15 6.200 Z M11.600 7.800 L12.600 9.200 L13.600 7.800 Z" fill="#333"/></svg>
<svg class="b" style="left:811px;top:-3px" width="20" height="18" viewBox="0 0 20 18" ><path d="M1.6 15.8 L6.8 10.6" stroke="#3f8fbe" stroke-width="3.4" stroke-linecap="round"/><path d="M1.6 15.8 L6.8 10.6" stroke="#a6d2ea" stroke-width="1.2" stroke-linecap="round"/><circle cx="11.2" cy="5.8" r="6.300" fill="#f1f5f8" stroke="#8d959b" stroke-width="1.3"/><path d="M17 2.400 L18.800 2.400 L18.800 4.200 M18.800 7 L18.800 8.800 L17 8.800" fill="none" stroke="#333" stroke-width="1"/></svg>
<svg class="b" style="left:838px;top:-3px" width="20" height="18" viewBox="0 0 20 18" ><path d="M2.200 9.200 L10.600 1 L14.400 -2 L17 1 L8.600 13.400 L5 13.800 Z" fill="#d4d6d8" stroke="#6f7377" stroke-width="1"/><ellipse cx="5.400" cy="11.200" rx="3.800" ry="2.400" transform="rotate(38 5.400 11.2)" fill="#f2f2f2" stroke="#6f7377" stroke-width="1"/><path d="M9.600 11.800 L13 9 L13 10.800 L18.600 10.800 L18.600 12.800 L13 12.800 L13 14.600 Z" fill="#3d8cbb"/></svg>
<svg class="b" style="left:864px;top:-3px" width="20" height="18" viewBox="0 0 20 18" ><path d="M1.400 1 L6.400 -1 L6.400 12.400 L1.400 14.400 Z M7.600 -1 L11.600 1 L11.600 14.400 L7.600 12.400 Z M12.800 1 L17.800 -1 L17.800 12.400 L12.800 14.400 Z" fill="#ebebeb" stroke="#dcdcdc" stroke-width=".8"/></svg>
<svg class="b" style="left:889px;top:-3px" width="20" height="18" viewBox="0 0 20 18" ><defs><linearGradient id="cua" x1="0" x2="1" y1="0" y2="1"><stop offset="0" stop-color="#9fd0ea"/><stop offset="1" stop-color="#4b93bf"/></linearGradient></defs><path d="M4.400 2 L16.600 -1 L18.800 2 L18.800 13.600 L14.400 16.600" fill="#fff" stroke="#555" stroke-width=".9"/><path d="M15.400 2.400 L18.600 2.400 M15.400 8.800 L18.600 8.800 M17 2.400 L17 8.800" stroke="#333" stroke-width=".8"/><rect x="1.400" y="4" width="13" height="12.400" fill="url(#cua)" stroke="#2c668c" stroke-width="1"/></svg>
<svg class="b" style="left:915.5px;top:3.6px" width="7" height="4" viewBox="0 0 7 4" ><path d="M.4 .4 L6 .4 L3.200 3.400 Z" fill="#8a8a8a"/></svg>
<svg class="b" style="left:930px;top:-3px" width="20" height="18" viewBox="0 0 20 18" ><defs><linearGradient id="cub" x1="0" x2="1" y1="0" y2="1"><stop offset="0" stop-color="#9fd0ea"/><stop offset="1" stop-color="#4b93bf"/></linearGradient></defs><path d="M1.600 -1 L9.400 2 L9.400 16.600 L1.600 13 Z" fill="url(#cub)" stroke="#2c668c" stroke-width=".9"/><path d="M9.400 2 L17.800 -1 L17.800 13 L9.400 16.600 Z" fill="#fcfcfc" stroke="#6c6c6c" stroke-width=".9"/></svg>
<svg class="b" style="left:955.5px;top:3.6px" width="7" height="4" viewBox="0 0 7 4" ><path d="M.4 .4 L6 .4 L3.200 3.400 Z" fill="#8a8a8a"/></svg>
<svg class="b" style="left:969px;top:-3px" width="21" height="18" viewBox="0 0 21 18" ><path d="M1 7.200 C5 -.6 15.600 -.6 19.800 7.200 C15.600 13 5 13 1 7.200 Z" fill="#f1f1f1" stroke="#8c8c8c" stroke-width="1.100"/><circle cx="10.400" cy="5.400" r="4" fill="#8e8e8e"/><circle cx="10.400" cy="5.400" r="1.800" fill="#5c5c5c"/><path d="M10.400 5 L10.400 15.400" stroke="#666" stroke-width="1"/></svg>
<svg class="b" style="left:995px;top:3.6px" width="7" height="4" viewBox="0 0 7 4" ><path d="M.4 .4 L6 .4 L3.200 3.400 Z" fill="#8a8a8a"/></svg>
<svg class="b" style="left:1009px;top:-3px" width="21" height="18" viewBox="0 0 21 18" ><circle cx="8" cy="5" r="7" fill="#ececec" stroke="#dedede"/><path d="M8.600 13.400 L16.400 4 L19.400 6.600 L11.600 15.800 L8 16.800 Z" fill="#f3f3f3" stroke="#d6d6d6" stroke-width="1"/></svg>
<svg class="b" style="left:1033px;top:-3px" width="10" height="18" viewBox="0 0 10 18" ><path d="M2 2 L9 2 L9 15.600 L2 15.600 Z" fill="#ececec" stroke="#dcdcdc"/><path d="M3.600 6 L8 6 M3.600 9 L8 9 M3.600 12 L8 12" stroke="#dcdcdc"/></svg>
<svg class="b" style="left:267px;top:722px" width="60" height="50" viewBox="0 0 60 50" ><defs><linearGradient id="rx" x1="0" x2="0" y1="0" y2="1"><stop offset="0" stop-color="#ff8a8a"/><stop offset=".6" stop-color="#ee1010"/><stop offset="1" stop-color="#b00000"/></linearGradient><linearGradient id="gy" x1="0" x2="1" y1="0" y2="0"><stop offset="0" stop-color="#0b5a16"/><stop offset=".6" stop-color="#2f8f3c"/><stop offset="1" stop-color="#86d690"/></linearGradient></defs><path d="M6.600 33.200 L8.800 31.600 L12.600 32.400 L14.800 35.600 L17.400 42 L16.200 46.200 L13.600 45.600 L10.800 41.200 L6.400 37.800 Z" fill="#0606b4"/><path d="M16.600 41.200 L35 38.800 L35 44 L16.600 46.200 Z" fill="url(#rx)"/><path d="M33.800 36.800 L44 40.600 L35.400 46 L33.800 44.600 Z" fill="#cc0808"/><path d="M35.400 38.200 L43 40.600 L37.400 42.200 Z" fill="#ff7c7c"/><path d="M13.800 25.200 L18.200 25.200 L18.200 42.400 L15.600 43.600 L13.800 40.800 Z" fill="url(#gy)"/><path d="M16 16.600 L21 24.800 L19.600 25.600 L12.400 25.600 L11 24.800 Z" fill="#0d5a18"/><path d="M12.800 5.400 L15.200 9.200 L17.600 5.400 M15.200 9.200 L15.200 11.400" fill="none" stroke="#108a1c" stroke-width="1.050"/><path d="M49.6 34.6 L54 40.2 M54 34.6 L49.6 40.2" fill="none" stroke="#ee2a2a" stroke-width="1.050"/><path d="M5.400 24.600 L9.600 24.600 L5.400 29.800 L9.600 29.800" fill="none" stroke="#2222ee" stroke-width="1.050"/></svg>
</body>
</html>
